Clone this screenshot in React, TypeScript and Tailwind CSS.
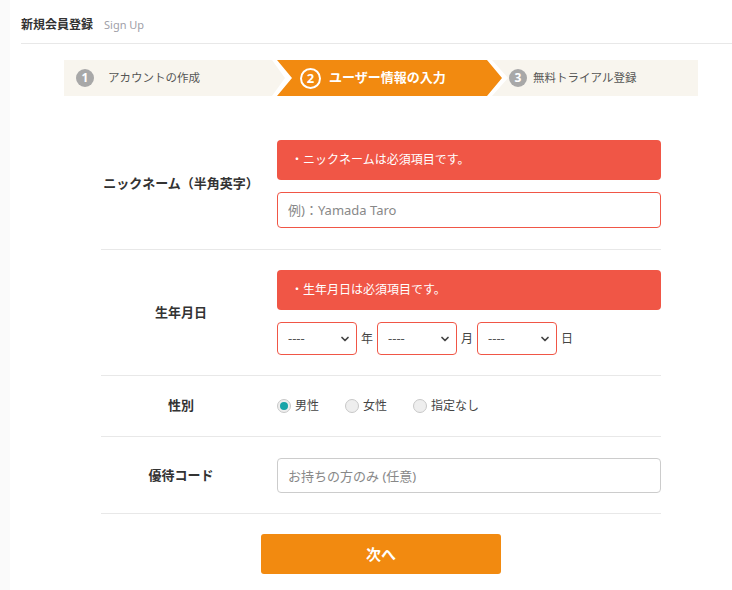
import { ChevronDown } from 'lucide-react'

const font = { fontFamily: '"Noto Sans", "Noto Sans CJK JP", sans-serif' }

function StepNum({ n, gray }: { n: number; gray?: boolean }) {
  if (gray) {
    return (
      <span className="flex h-[18px] w-[18px] items-center justify-center rounded-full bg-[#a8a8a8] text-[12px] font-bold leading-none text-white">
        {n}
      </span>
    )
  }
  return (
    <span className="flex h-[21px] w-[21px] items-center justify-center rounded-full border-2 border-white text-[13px] font-bold leading-none text-white">
      {n}
    </span>
  )
}

function Row({ label, children, className = '' }: { label: string; children: React.ReactNode; className?: string }) {
  return (
    <div className={'flex items-center gap-4 border-b border-[#e8e8e8] py-5 ' + className}>
      <div className="w-[160px] text-center text-[13px] font-bold text-[#333]">{label}</div>
      <div className="flex-1">{children}</div>
    </div>
  )
}

function ErrorBox({ text }: { text: string }) {
  return (
    <div className="flex h-[40px] items-center rounded bg-[#f05646] pl-[14px] text-[12px] text-white">
      ・{text}
    </div>
  )
}

function DateSelect() {
  return (
    <div className="relative">
      <select className="h-[33px] w-[80px] appearance-none rounded border border-[#f05646] bg-white pl-[10px] text-[13px] text-[#555] outline-none">
        <option>----</option>
      </select>
      <ChevronDown className="pointer-events-none absolute right-[6px] top-[11px] h-[12px] w-[12px] text-[#444]" strokeWidth={3.5} />
    </div>
  )
}

function Radio({ label, checked }: { label: string; checked?: boolean }) {
  return (
    <label className="flex items-center gap-[4px] text-[12px] text-[#444]">
      <span className="flex h-[14px] w-[14px] items-center justify-center rounded-full border border-[#c8c8c8] bg-[#eeeeee]">
        {checked && <span className="h-[8px] w-[8px] rounded-full bg-[#18a4a8]" />}
      </span>
      {label}
    </label>
  )
}

export default function App() {
  return (
    <div className="flex min-h-[590px] bg-white" style={font}>
      <div className="w-[10px] shrink-0 bg-[#fafafa]" />
      <main className="flex-1 pl-[11px]">
        {/* Header */}
        <div className="flex h-[44px] items-center gap-[11px] border-b border-[#e8e8e8] pt-[7px]">
          <h1 className="text-[12px] font-bold text-[#333]">新規会員登録</h1>
          <span className="text-[11px] text-[#a0a0a8]">Sign Up</span>
        </div>

        {/* Steps */}
        <div className="ml-[43px] mt-[16px] flex h-[36px] w-[634px] bg-[#f8f5ee]">
          <div className="flex w-[208px] items-center gap-[14px] pl-[12px] text-[11.5px] text-[#555]">
            <StepNum n={1} gray />
            アカウントの作成
          </div>
          <div className="h-full w-[236px] bg-white [clip-path:polygon(0_0,220px_0,236px_18px,220px_36px,0_36px,13px_18px)]">
            <div className="flex h-full w-full items-center gap-[8px] bg-[#f28a10] pl-[28px] text-[13px] font-bold text-white [clip-path:polygon(5px_0,215px_0,230px_18px,215px_36px,5px_36px,20px_18px)]">
              <StepNum n={2} />
              ユーザー情報の入力
            </div>
          </div>
          <div className="flex flex-1 items-center gap-[6px] pl-[1px] text-[11.5px] text-[#555]">
            <StepNum n={3} gray />
            無料トライアル登録
          </div>
        </div>

        {/* Form */}
        <div className="ml-[80px] mt-[24px] w-[560px]">
          <Row label="ニックネーム（半角英字）" className="pb-[21px]">
            <div className="flex flex-col gap-3">
              <ErrorBox text="ニックネームは必須項目です。" />
              <input
                className="h-[36px] w-full rounded border border-[#f05646] px-[10px] text-[13px] text-[#333] outline-none placeholder:text-[#888]"
                placeholder="例)：Yamada Taro"
              />
            </div>
          </Row>
          <Row label="生年月日">
            <div className="flex flex-col gap-3">
              <ErrorBox text="生年月日は必須項目です。" />
              <div className="flex items-center gap-[4px] text-[12px] text-[#444]">
                <DateSelect />
                <span>年</span>
                <DateSelect />
                <span>月</span>
                <DateSelect />
                <span>日</span>
              </div>
            </div>
          </Row>
          <Row label="性別">
            <div className="flex h-[20px] items-center gap-[26px]">
              <Radio label="男性" checked />
              <Radio label="女性" />
              <Radio label="指定なし" />
            </div>
          </Row>
          <Row label="優待コード" className="pt-[21px]">
            <input
              className="h-[35px] w-full rounded border border-[#cccccc] px-[10px] text-[13px] text-[#333] outline-none placeholder:text-[#888]"
              placeholder="お持ちの方のみ (任意)"
            />
          </Row>
          <div className="flex justify-center pt-[20px]">
            <button className="h-[40px] w-[240px] rounded-[3px] bg-[#f28a10] text-[15px] font-bold text-white">
              次へ
            </button>
          </div>
        </div>
      </main>
    </div>
  )
}
